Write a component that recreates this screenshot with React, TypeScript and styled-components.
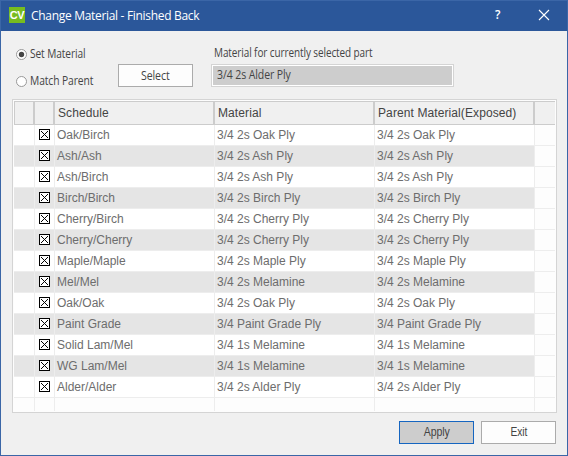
import React from 'react';
import styled, { createGlobalStyle } from 'styled-components';

const Global = createGlobalStyle`
  * { box-sizing: border-box; }
  html, body { margin: 0; padding: 0; overflow: hidden; }
`;

const Dialog = styled.div`
  width: 568px;
  height: 456px;
  display: flex;
  flex-direction: column;
  background: #f0f0f0;
  border: 1px solid #3b66a7;
  color: #444;
  font: 12px 'Open Sans', 'Noto Sans', sans-serif;
`;

const TitleBar = styled.header`
  height: 30px;
  flex: none;
  display: flex;
  align-items: center;
  padding: 0 18px 2px 8px;
  background: #2b579a;
  color: #fff;
`;

const Logo = styled.div`
  width: 16px;
  height: 16px;
  display: flex;
  align-items: center;
  justify-content: center;
  background: #77bc1f;
  font: bold 11px/16px 'Liberation Sans', sans-serif;
  letter-spacing: -0.4px;
`;

const Fit = styled.svg<{ $w: number; $h: number }>`
  display: block;
  flex: none;
  width: ${(p) => p.$w}px;
  height: ${(p) => p.$h}px;
  overflow: visible;
`;

const Title = styled.h1`
  flex: 1;
  margin: 2px 0 0 6px;
  font: 12px/16px 'Open Sans', sans-serif;
  letter-spacing: -0.31px;
  white-space: nowrap;
`;

const Help = styled.span`
  width: 8px;
  margin-right: 36px;
  font: 600 12px/16px 'Open Sans', sans-serif;
`;

const Form = styled.section`
  height: 68px;
  flex: none;
  display: flex;
  padding-left: 15px;
`;

const Radios = styled.div`
  width: 102px;
  padding-top: 15px;
  display: flex;
  flex-direction: column;
  gap: 11px;
`;

const Condensed = styled.span<{ $scale: number; $center?: boolean }>`
  display: inline-block;
  white-space: nowrap;
  letter-spacing: -0.1px;
  transform: scaleX(${(p) => p.$scale});
  transform-origin: ${(p) => (p.$center ? 'center' : 'left')};
`;

const RadioRow = styled.label`
  height: 16px;
  display: flex;
  align-items: center;
  gap: 3px;
  font: 12px/16px 'Open Sans', sans-serif;
`;

const Button = styled.button<{ $active?: boolean; $plain?: boolean }>`
  width: 75px;
  height: 23px;
  padding: 0;
  flex: none;
  border: 1px solid ${(p) => (p.$active ? '#1565c0' : '#ababab')};
  background: ${(p) => (p.$active ? '#cdcdcd' : '#fdfdfd')};
  color: #444;
  font: 12px/21px ${(p) => (p.$plain ? "'Liberation Sans'" : "'Open Sans'")}, sans-serif;
`;

const SelectSlot = styled.div`
  width: 93px;
  padding-top: 33px;
`;

const Field = styled.div`
  padding-top: 14px;
`;

const FieldLabel = styled.div`
  width: 200px;
  height: 19px;
  padding-left: 3px;
  font: 12px/16px 'Open Sans', sans-serif;
`;

const ReadOnlyBox = styled.div`
  width: 243px;
  height: 23px;
  border: 1px solid #d4d4d4;
  background: #cdcdcd;
  box-shadow: inset 0 0 0 1px #fff;
  padding-left: 5px;
  font: 12px/19px 'Open Sans', sans-serif;
`;

const GridFrame = styled.section`
  width: 545px;
  height: 314px;
  flex: none;
  margin-left: 11px;
  border: 1px solid #d4d4d4;
  background: #fdfdfd;
  padding: 1px;
  display: flex;
  flex-direction: column;
`;

const Columns = styled.div`
  display: grid;
  grid-template-columns: 21px 20px 160px 160px 160px 20px;
`;

const HeaderRow = styled(Columns)`
  height: 24px;
  flex: none;
  border-top: 1px solid #ccc;
  border-bottom: 1px solid #ccc;
  background: #f0f0f0;
`;

const HeaderCell = styled.div`
  border-right: 2px solid #ccc;
  padding-left: 3px;
  font: 12px/23px 'Liberation Sans', sans-serif;
  letter-spacing: 0.1px;
  color: #444;
  white-space: nowrap;
  &:first-child { border-left: 1px solid #ccc; }
  &:last-child { border-right: 0; }
`;

const Row = styled(Columns)<{ $shaded?: boolean }>`
  height: 21px;
  flex: none;
  border-bottom: 1px solid #ededed;
  background: linear-gradient(${(p) => (p.$shaded ? '#e5e5e5, #e5e5e5' : '#fff, #fff')}) 0 0 / 521px 100% no-repeat;
`;

const TailRow = styled(Columns)`
  flex: 1;
`;

const Cell = styled.div`
  border-right: 1px solid #ededed;
  padding-left: 2px;
  font: 12px/20px 'Liberation Sans', sans-serif;
  color: #6d6d6d;
  white-space: nowrap;
  &:last-child { border-right: 0; }
`;

const CheckCell = styled(Cell)`
  padding: 4px 0 0 4px;
`;

const Footer = styled.footer`
  display: flex;
  justify-content: flex-end;
  gap: 7px;
  padding: 8px 11px 0 0;
`;

const Radio = ({ checked }: { checked?: boolean }) => (
  <Fit $w={11} $h={11} viewBox="0 0 11 11">
    <circle cx="5.5" cy="5.5" r="5" fill="#fff" stroke="#999" />
    {checked && <circle cx="5.5" cy="5.5" r="2.7" fill="#444" />}
  </Fit>
);

const Check = () => (
  <Fit $w={11} $h={11} viewBox="0 0 11 11" shapeRendering="crispEdges">
    <rect x="0.5" y="0.5" width="10" height="10" fill="#fff" stroke="#000" />
    <path d="M2 2L9 9M9 2L2 9" stroke="#000" />
  </Fit>
);

const rows: [string, string][] = [
  ['Oak/Birch', '3/4 2s Oak Ply'],
  ['Ash/Ash', '3/4 2s Ash Ply'],
  ['Ash/Birch', '3/4 2s Ash Ply'],
  ['Birch/Birch', '3/4 2s Birch Ply'],
  ['Cherry/Birch', '3/4 2s Cherry Ply'],
  ['Cherry/Cherry', '3/4 2s Cherry Ply'],
  ['Maple/Maple', '3/4 2s Maple Ply'],
  ['Mel/Mel', '3/4 2s Melamine'],
  ['Oak/Oak', '3/4 2s Oak Ply'],
  ['Paint Grade', '3/4 Paint Grade Ply'],
  ['Solid Lam/Mel', '3/4 1s Melamine'],
  ['WG Lam/Mel', '3/4 1s Melamine'],
  ['Alder/Alder', '3/4 2s Alder Ply'],
];

export default function App() {
  return (
    <Dialog>
      <Global />
      <TitleBar>
        <Logo>CV</Logo>
        <Title>Change Material - Finished Back</Title>
        <Help>?</Help>
        <Fit $w={10} $h={10} viewBox="0 0 10 10">
          <path d="M0 0L10 10M10 0L0 10" stroke="#fff" strokeWidth="1.1" />
        </Fit>
      </TitleBar>
      <Form>
        <Radios>
          <RadioRow><Radio checked /><Condensed $scale={0.845}>Set Material</Condensed></RadioRow>
          <RadioRow><Radio /><Condensed $scale={0.855}>Match Parent</Condensed></RadioRow>
        </Radios>
        <SelectSlot><Button><Condensed $scale={0.88} $center>Select</Condensed></Button></SelectSlot>
        <Field>
          <FieldLabel><Condensed $scale={0.83}>Material for currently selected part</Condensed></FieldLabel>
          <ReadOnlyBox><Condensed $scale={0.875}>3/4 2s Alder Ply</Condensed></ReadOnlyBox>
        </Field>
      </Form>
      <GridFrame>
        <HeaderRow>
          <HeaderCell />
          <HeaderCell />
          <HeaderCell>Schedule</HeaderCell>
          <HeaderCell>Material</HeaderCell>
          <HeaderCell>Parent Material(Exposed)</HeaderCell>
          <HeaderCell />
        </HeaderRow>
        {rows.map(([schedule, material], i) => (
          <Row key={schedule} $shaded={i % 2 === 1}>
            <Cell />
            <CheckCell><Check /></CheckCell>
            <Cell>{schedule}</Cell>
            <Cell>{material}</Cell>
            <Cell>{material}</Cell>
            <Cell />
          </Row>
        ))}
        <TailRow>
          <Cell /><Cell /><Cell /><Cell /><Cell /><Cell />
        </TailRow>
      </GridFrame>
      <Footer>
        <Button $active $plain><Condensed $scale={0.88} $center>Apply</Condensed></Button>
        <Button $plain><Condensed $scale={0.85} $center>Exit</Condensed></Button>
      </Footer>
    </Dialog>
  );
}
